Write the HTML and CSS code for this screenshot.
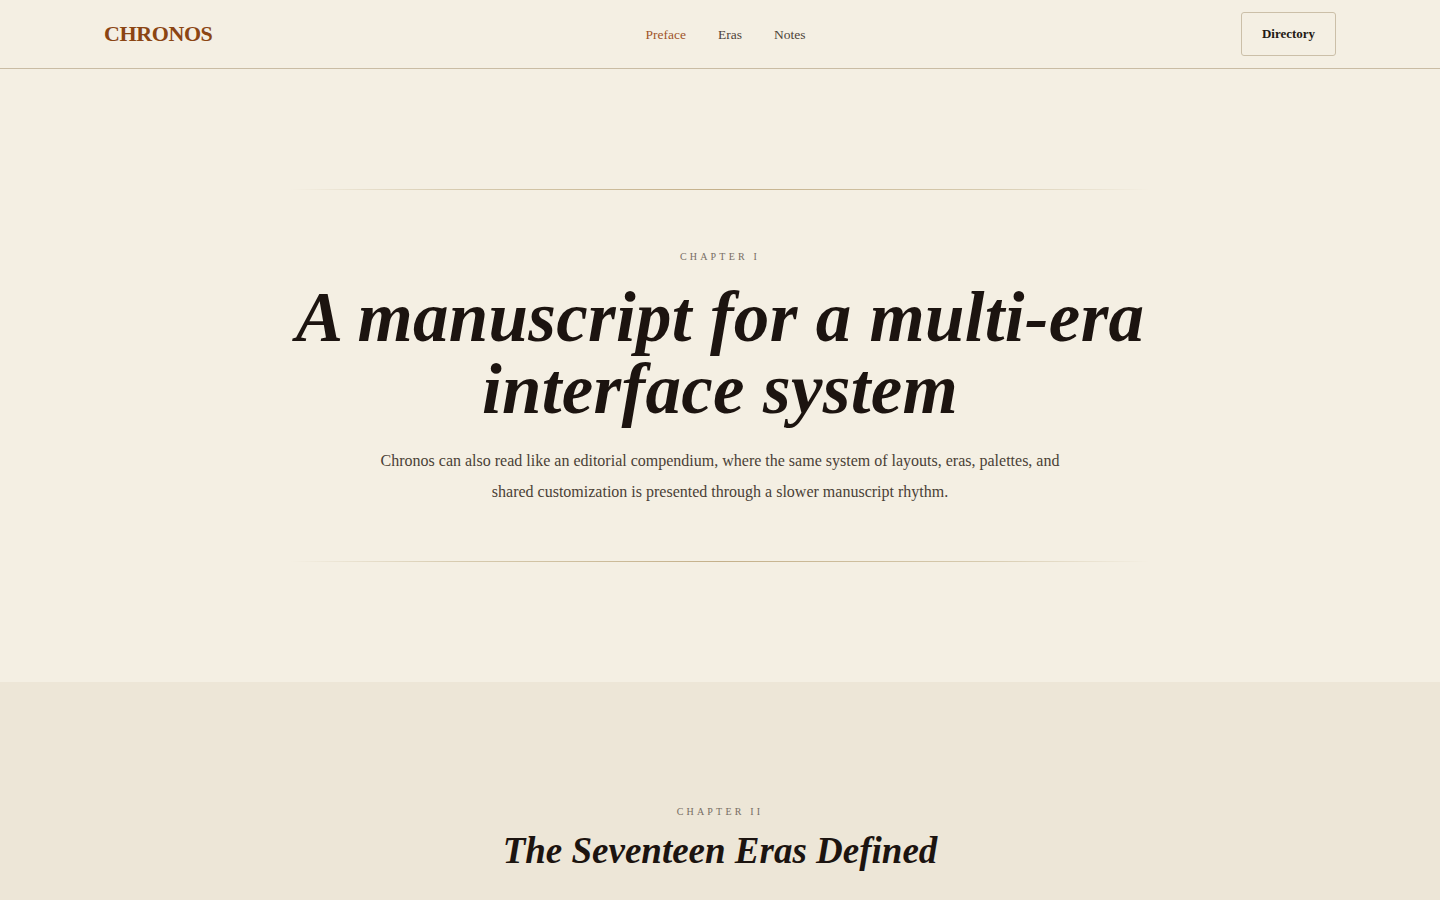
FILE: index.html
```html
<!DOCTYPE html>
<html lang="en">
<head>
<meta charset="utf-8">
<title>Chronos</title>
<link rel="stylesheet" href="styles.css">
</head>
<body>
<header class="site-header">
  <div class="header-inner">
    <a class="logo" href="#">CHRONOS</a>
    <nav class="nav">
      <a class="nav-link active" href="#">Preface</a>
      <a class="nav-link" href="#">Eras</a>
      <a class="nav-link" href="#">Notes</a>
    </nav>
    <a class="btn-directory" href="#">Directory</a>
  </div>
</header>
<main>
  <section class="hero">
    <div class="hero-inner">
      <div class="rule"></div>
      <div class="hero-content">
        <p class="chapter">CHAPTER I</p>
        <h1 class="hero-title">A manuscript for a multi-era interface system</h1>
        <p class="hero-text">Chronos can also read like an editorial compendium, where the same system of layouts, eras, palettes, and shared customization is presented through a slower manuscript rhythm.</p>
      </div>
      <div class="rule"></div>
    </div>
  </section>
  <section class="eras">
    <p class="chapter">CHAPTER II</p>
    <h2 class="section-title">The Seventeen Eras Defined</h2>
  </section>
</main>
</body>
</html>
```
FILE: styles.css
```css
* { box-sizing: border-box; }
html, body { margin: 0; padding: 0; }
body {
  background: #f4efe3;
  color: #1c1410;
  font-family: "Liberation Serif", "Times New Roman", serif;
}
a { text-decoration: none; color: inherit; }
p, h1, h2 { margin: 0; }

.site-header {
  height: 69px;
  border-bottom: 1px solid #c9bca4;
}
.header-inner {
  height: 68px;
  padding: 0 104px;
  display: grid;
  grid-template-columns: 1fr auto 1fr;
  align-items: center;
}
.logo {
  justify-self: start;
  font-size: 22px;
  font-weight: 700;
  color: #8b4513;
  letter-spacing: -0.4px;
}
.nav {
  display: flex;
  gap: 32px;
  font-size: 13.5px;
  padding-left: 11px;
  padding-top: 2px;
}
.nav-link { color: #4d4238; }
.nav-link.active { color: #a0552a; }
.btn-directory {
  justify-self: end;
  width: 95px;
  height: 44px;
  border: 1px solid #cbbfa8;
  border-radius: 3px;
  display: flex;
  align-items: center;
  justify-content: center;
  font-size: 13px;
  font-weight: 700;
  color: #231a14;
}

.hero {
  padding: 120px 0 120px;
}
.hero-inner {
  width: 860px;
  margin: 0 auto;
}
.rule {
  height: 1px;
  background: linear-gradient(90deg, rgba(200,185,154,0) 0%, #d6caae 20%, #c4b08a 50%, #d6caae 80%, rgba(200,185,154,0) 100%);
}
.hero-content {
  padding: 61px 0 54px;
  text-align: center;
}
.chapter {
  font-size: 10px;
  letter-spacing: 3.2px;
  color: #776d63;
  text-align: center;
  line-height: 12px;
}
.hero-title {
  margin: 18px auto 20px;
  font-size: 71px;
  line-height: 72px;
  font-style: italic;
  font-weight: 700;
  color: #1c1410;
  letter-spacing: 0.3px;
}
.hero-text {
  max-width: 680px;
  margin: 0 auto;
  font-size: 16px;
  line-height: 31px;
  color: #4a3f36;
}

.eras {
  background: #ede6d7;
  padding: 124px 0 40px;
  text-align: center;
}
.section-title {
  margin-top: 10px;
  font-size: 37px;
  line-height: 46px;
  font-style: italic;
  font-weight: 700;
  color: #1c1410;
}
```
